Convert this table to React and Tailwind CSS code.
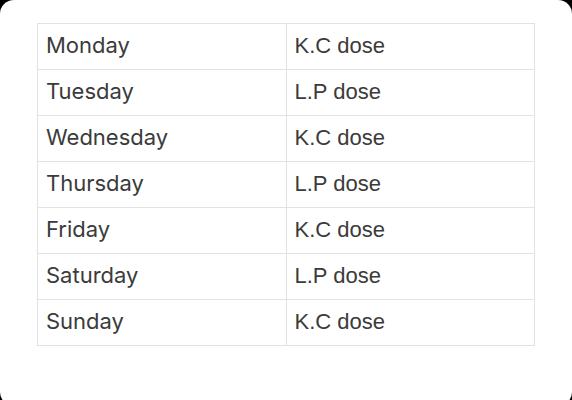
import React from "react";

const rows = [
  ["Monday", "K.C dose"],
  ["Tuesday", "L.P dose"],
  ["Wednesday", "K.C dose"],
  ["Thursday", "L.P dose"],
  ["Friday", "K.C dose"],
  ["Saturday", "L.P dose"],
  ["Sunday", "K.C dose"],
];

const App = () => {
  return (
    <div className="w-[572px] h-[400px] bg-black overflow-hidden">
      <div className="h-[406px] bg-white rounded-[14px] pt-[23px] px-[37px]">
        <div className="grid grid-cols-2 border-l border-t border-[#e2e2e2] text-[22px] text-[#3b3b3b]">
          {rows.map(([day, dose]) => (
            <React.Fragment key={day}>
              <div className="h-[46px] flex items-center pl-[8px] pb-[2px] border-r border-b border-[#e2e2e2] font-['Inter',sans-serif]">
                {day}
              </div>
              <div className="h-[46px] flex items-center pl-[8px] pb-[2px] border-r border-b border-[#e2e2e2] font-['Liberation_Sans',Arial,sans-serif]">
                {dose}
              </div>
            </React.Fragment>
          ))}
        </div>
      </div>
    </div>
  );
};

export default App;
